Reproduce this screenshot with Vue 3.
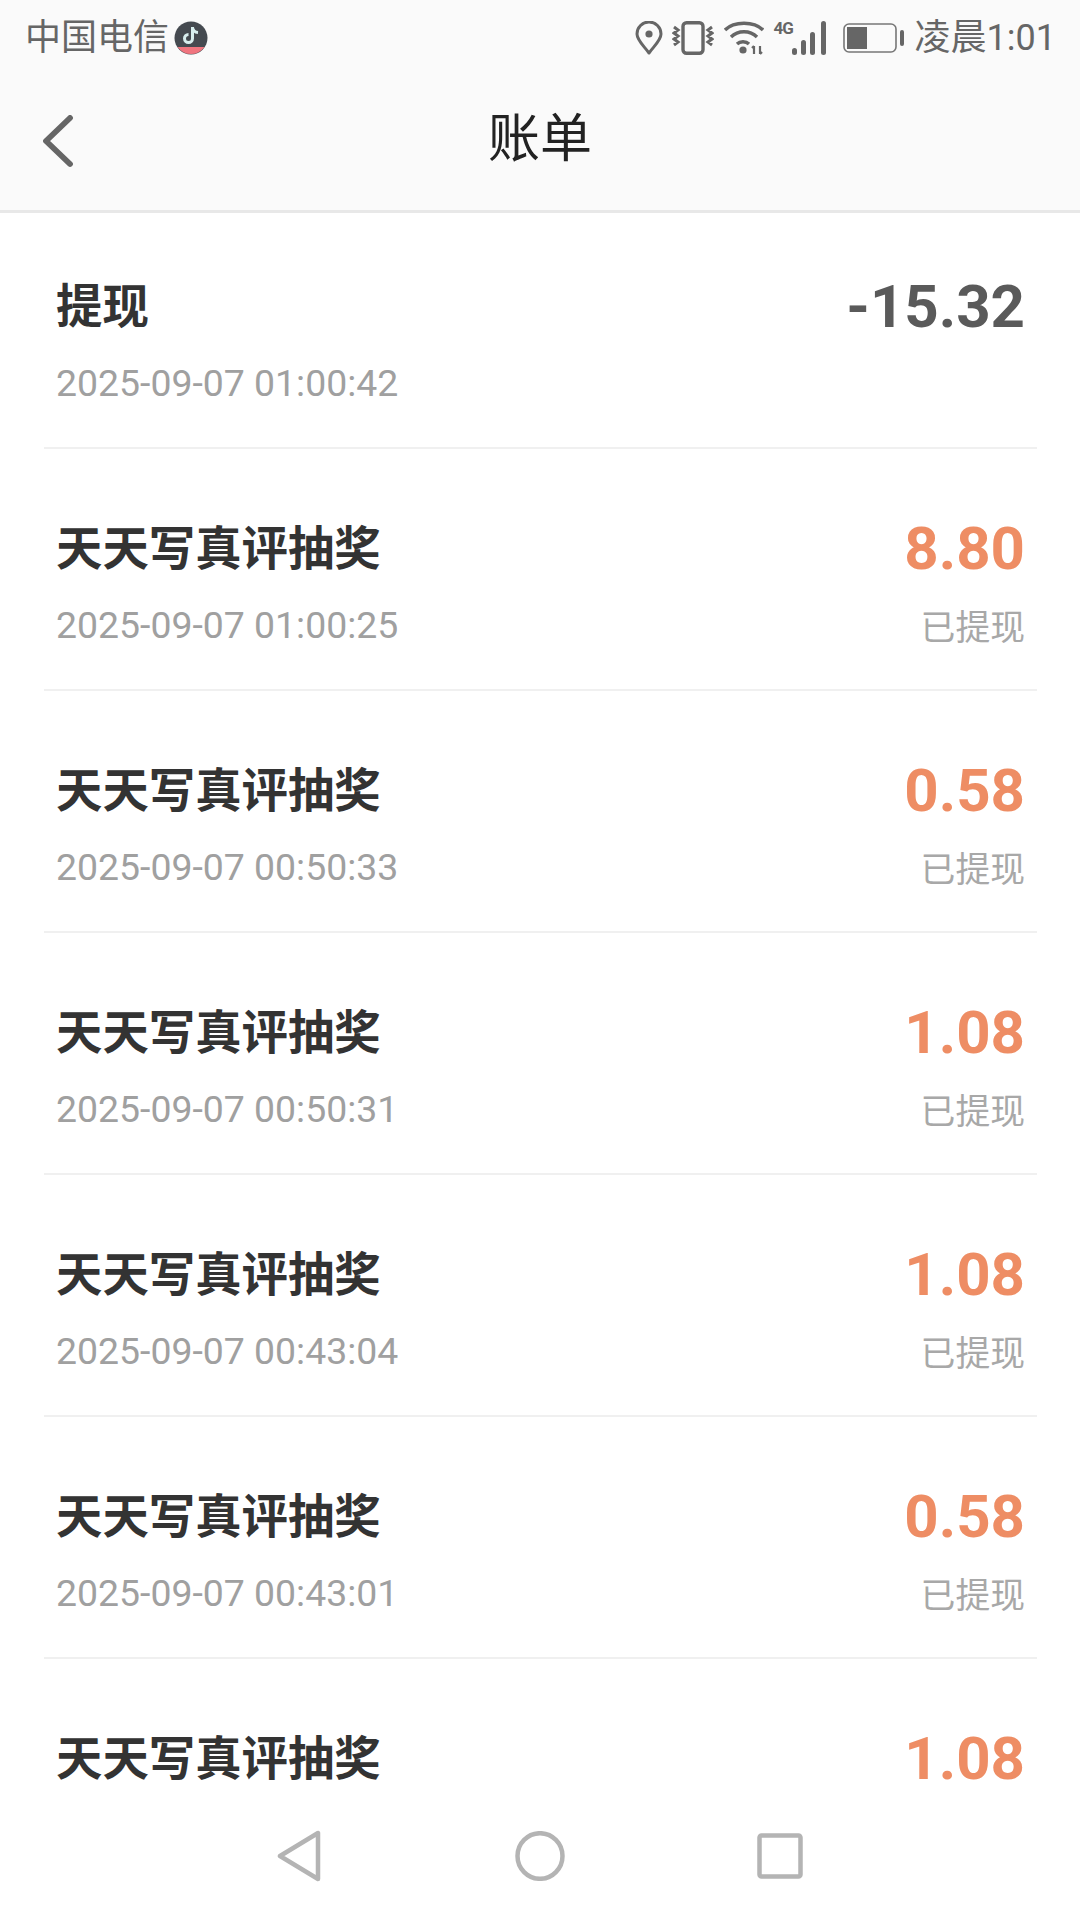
<script setup>
const rows = [
  { title: '提现', time: '2025-09-07 01:00:42', amount: '-15.32', out: true },
  { title: '天天写真评抽奖', time: '2025-09-07 01:00:25', amount: '8.80', note: '已提现' },
  { title: '天天写真评抽奖', time: '2025-09-07 00:50:33', amount: '0.58', note: '已提现' },
  { title: '天天写真评抽奖', time: '2025-09-07 00:50:31', amount: '1.08', note: '已提现' },
  { title: '天天写真评抽奖', time: '2025-09-07 00:43:04', amount: '1.08', note: '已提现' },
  { title: '天天写真评抽奖', time: '2025-09-07 00:43:01', amount: '0.58', note: '已提现' },
  { title: '天天写真评抽奖', amount: '1.08' }
]
</script>

<template>
  <div class="page">
    <header class="top">
      <div class="status">
        <div class="status-left">
          <span class="carrier">中国电信</span>
          <svg class="tiktok" width="34" height="34" viewBox="0 0 34 34">
            <circle cx="17" cy="17" r="16.5" fill="#454a50" />
            <path d="M3.5 26h27a16.5 16.5 0 0 1-27 0z" fill="#f0757f" />
            <path d="M18.5 6v11.5a4 4 0 1 1-4-4M18.5 6.5c.5 3 2.5 4.8 5.5 5" fill="none" stroke="#d8eeee" stroke-width="3" />
          </svg>
        </div>
        <div class="status-right">
          <svg width="28" height="34" viewBox="0 0 28 34" fill="none">
            <path d="M14 32C8 24 2 19 2 13a12 12 0 0 1 24 0c0 6-6 11-12 19z" stroke="#666" stroke-width="3" stroke-linejoin="round" />
            <circle cx="14" cy="13" r="3.6" fill="#666" />
          </svg>
          <svg class="gap-vib" width="42" height="34" viewBox="0 0 42 34" fill="none" stroke="#666">
            <rect x="11" y="1.8" width="20" height="30.4" rx="3.5" stroke-width="3.4" />
            <path d="M2 6l4 3-4 3 4 3-4 3 4 3-4 3M40 6l-4 3 4 3-4 3 4 3-4 3 4 3" stroke-width="3" />
          </svg>
          <svg class="gap-wifi" width="40" height="34" viewBox="0 0 40 34" fill="none" stroke="#666">
            <path d="M1 9C10 0 30 0 39 9M7 16C14 9 26 9 33 16M13 23c3-3 9-3 12 0" stroke-width="3.4" />
            <circle cx="19" cy="29" r="3.6" fill="#666" stroke="none" />
            <path d="M30 25v8M28 27l2-2M36 25v8M38 31l-2 2" stroke-width="2.2" />
          </svg>
          <div class="signal">
            <span class="net">4G</span>
            <svg width="35" height="34" viewBox="0 0 35 34" fill="#666">
              <rect x="0" y="27" width="5" height="7" rx="2.5" />
              <rect x="9" y="19" width="5" height="15" rx="2.5" />
              <rect x="18" y="11" width="5" height="23" rx="2.5" />
              <rect x="29" y="0" width="5" height="34" rx="2.5" />
            </svg>
          </div>
          <svg class="gap-bat" width="62" height="30" viewBox="0 0 62 30">
            <rect x="1" y="1" width="52" height="28" rx="5" fill="none" stroke="#777" stroke-width="1.6" />
            <rect x="4" y="4" width="20" height="22" fill="#666" />
            <rect x="57" y="7" width="4" height="16" rx="2" fill="#666" />
          </svg>
          <span class="clock">凌晨1:01</span>
        </div>
      </div>
      <div class="nav-title">
        <svg class="back" width="34" height="54" viewBox="0 0 34 54" fill="none">
          <path d="M29 3L5 26l24 23" stroke="#666" stroke-width="5.8" stroke-linecap="round" stroke-linejoin="round" />
        </svg>
        <h1>账单</h1>
      </div>
    </header>

    <main class="list">
      <div v-for="(r, i) in rows" :key="i" class="row">
        <div class="left">
          <div class="title">{{ r.title }}</div>
          <div v-if="r.time" class="time">{{ r.time }}</div>
        </div>
        <div class="right">
          <div class="amount" :class="{ out: r.out }">{{ r.amount }}</div>
          <div v-if="r.note" class="note">{{ r.note }}</div>
        </div>
      </div>
    </main>

    <footer class="softkeys">
      <svg width="46" height="52" viewBox="0 0 46 52" fill="none" stroke="#b4b4b4" stroke-width="4.5" stroke-linejoin="round">
        <path d="M41 3v46L3 26z" />
      </svg>
      <svg width="50" height="50" viewBox="0 0 50 50" fill="none" stroke="#b4b4b4" stroke-width="4.5">
        <ellipse cx="25" cy="25" rx="22.5" ry="22.8" />
      </svg>
      <svg width="46" height="46" viewBox="0 0 46 46" fill="none" stroke="#b4b4b4" stroke-width="4.5" stroke-linejoin="round">
        <rect x="2.5" y="2.5" width="41" height="41" rx="2" />
      </svg>
    </footer>
  </div>
</template>

<style scoped>
.page {
  width: 1080px;
  height: 1920px;
  display: flex;
  flex-direction: column;
  overflow: hidden;
  background: #fff;
  font-family: Roboto, "Noto Sans CJK SC", sans-serif;
}
.top {
  flex: none;
  height: 213px;
  box-sizing: border-box;
  background: #fafafa;
  border-bottom: 3px solid #e8e8e8;
}
.status {
  height: 72px;
  padding: 3px 24px 0 25px;
  box-sizing: border-box;
  display: flex;
  justify-content: space-between;
  align-items: center;
}
.status-left,
.status-right {
  display: flex;
  align-items: center;
}
.carrier,
.clock {
  font-size: 36px;
  color: #666;
  line-height: 40px;
  white-space: nowrap;
}
.tiktok {
  margin-left: 5px;
}
.gap-vib {
  margin-left: 9px;
}
.gap-wifi {
  margin-left: 10px;
}
.signal {
  position: relative;
  width: 53px;
  height: 34px;
  margin-left: 10px;
  display: flex;
  justify-content: flex-end;
  align-items: flex-end;
}
.net {
  position: absolute;
  left: 0;
  top: -1px;
  font-size: 17px;
  font-weight: 700;
  letter-spacing: -1px;
  color: #666;
  line-height: 16px;
}
.gap-bat {
  margin-left: 16px;
}
.clock {
  margin-left: 10px;
}
.nav-title {
  position: relative;
  height: 138px;
  display: flex;
  align-items: center;
  justify-content: center;
}
.back {
  position: absolute;
  left: 41px;
  top: 43px;
}
h1 {
  margin: 0 0 2px;
  font-size: 52px;
  font-weight: 400;
  line-height: 60px;
  color: #222;
}
.list {
  flex: 1;
  min-height: 0;
  overflow: hidden;
  padding: 0 43px 0 44px;
}
.row {
  height: 242px;
  box-sizing: border-box;
  padding: 0 12px;
  display: flex;
  justify-content: space-between;
  border-bottom: 2px solid #f0f0f0;
}
.row:first-child {
  height: 236px;
}
.row:first-child .left,
.row:first-child .right {
  padding-top: 67px;
}
.row:last-child {
  height: 137px;
  border-bottom: 0;
}
.left,
.right {
  padding-top: 73px;
}
.title {
  font-size: 46.4px;
  font-weight: 700;
  line-height: 54px;
  color: #333;
  white-space: nowrap;
}
.time {
  margin-top: 27px;
  font-size: 37.4px;
  line-height: 44px;
  color: #a0a0a0;
  white-space: nowrap;
}
.right {
  text-align: right;
}
.amount {
  font-size: 60px;
  font-weight: 700;
  line-height: 54px;
  color: #ee8d64;
}
.amount.out {
  color: #5a5a5a;
}
.note {
  margin-top: 32px;
  font-size: 34.8px;
  line-height: 40px;
  color: #a8a8a8;
}
.softkeys {
  flex: none;
  height: 124px;
  padding-bottom: 4px;
  background: #fff;
  box-sizing: border-box;
  display: grid;
  grid-template-columns: 300px 180px 300px;
  justify-content: center;
  align-items: center;
  justify-items: center;
}
</style>
